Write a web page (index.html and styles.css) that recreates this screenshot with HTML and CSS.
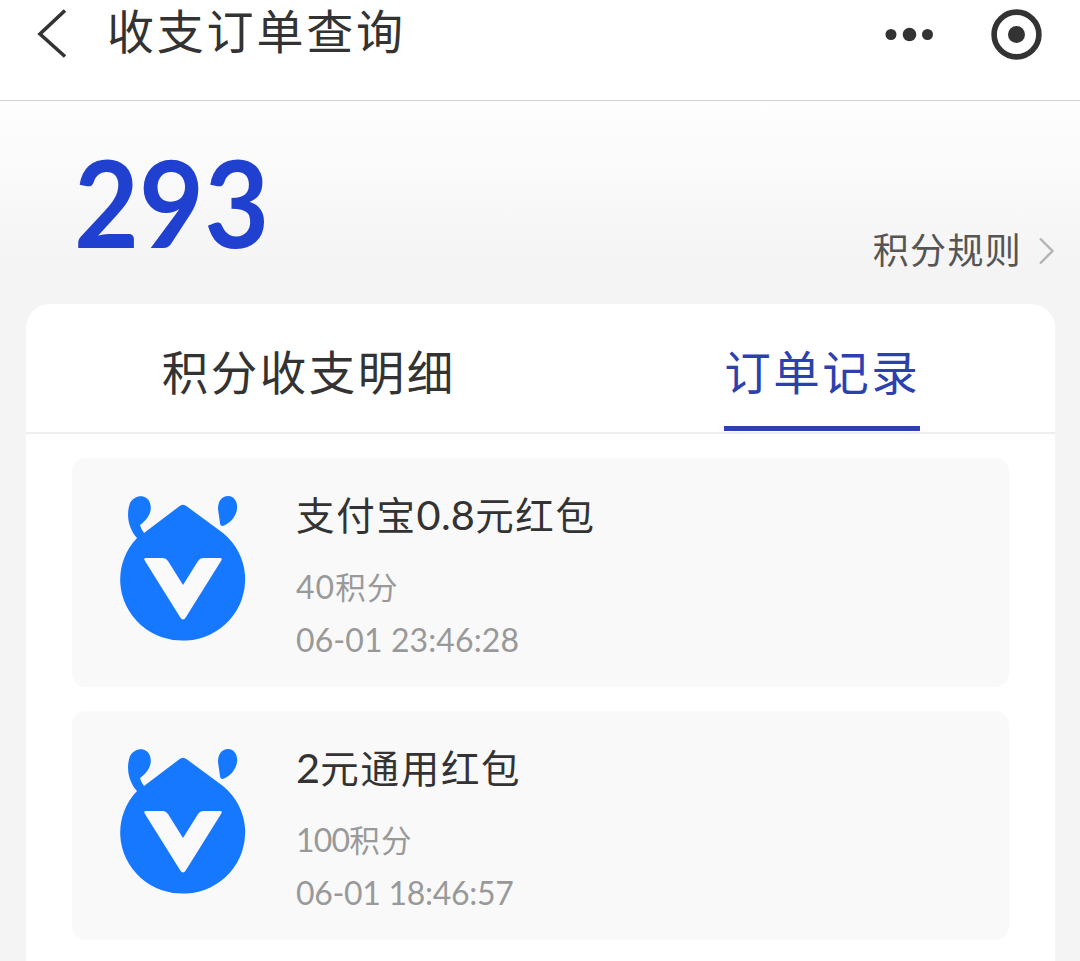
FILE: index.html
```html
<!DOCTYPE html>
<html lang="zh-CN">
<head>
<meta charset="utf-8">
<title>收支订单查询</title>
<link rel="stylesheet" href="styles.css">
</head>
<body>
<svg class="defs" width="0" height="0" aria-hidden="true">
  <symbol id="mascot" viewBox="0 0 126 146">
    <path fill="#1677ff" d="M17 43C8 33 6 19 10 8C15-1 27-1 30 8C33 17 27 25 20 30Q21 34 24 38L59 11.500Q63 8 67 11.500L103 38A62.500 61 0 1 1 17 43Z"/>
    <path fill="#1677ff" d="M98 14C98 6 102 1 108 1C114 1 118 7 117 14C116 22 110 28 103 31Q100 31 100 28Z"/>
    <path fill="#fafafa" d="M26 63H43Q46 63 48 66L63 90L78 66Q80 63 83 63H100Q103 63 101 66L66 122Q63 127 60 122L25 66Q23 63 26 63Z"/>
  </symbol>
</svg>
<header class="nav">
  <svg class="back" width="30" height="50" viewBox="0 0 30 50"><path d="M28 1.500L3 25L28 47.500"/></svg>
  <h1 class="nav-title">收支订单查询</h1>
  <svg class="more" width="50" height="16" viewBox="0 0 50 16"><circle cx="6" cy="8.500" r="5.500"/><circle cx="24.500" cy="8.500" r="6.800"/><circle cx="42.500" cy="8.500" r="5.500"/></svg>
  <svg class="target" width="52" height="52" viewBox="0 0 52 52"><circle class="ring" cx="26.500" cy="26.500" r="22.400"/><circle cx="26.500" cy="26.500" r="8.500"/></svg>
</header>
<main class="page">
  <section class="summary">
    <div class="points">293</div>
    <div class="rules"><span>积分规则</span><svg width="16" height="28" viewBox="0 0 16 28"><path d="M1 2.500L13.500 15L1 27.500"/></svg></div>
  </section>
  <section class="panel">
    <nav class="tabs">
      <div class="tab"><span class="label">积分收支明细</span></div>
      <div class="tab active"><span class="label">订单记录</span></div>
    </nav>
    <div class="orders">
      <article class="order">
        <svg class="avatar"><use href="#mascot"/></svg>
        <div class="info">
          <h2 class="name">支付宝<span class="num">0.8</span>元红包</h2>
          <p class="cost"><span class="digits">40</span>积分</p>
          <p class="time">06-01 23:46:28</p>
        </div>
      </article>
      <article class="order">
        <svg class="avatar"><use href="#mascot"/></svg>
        <div class="info">
          <h2 class="name"><span class="num">2</span>元通用红包</h2>
          <p class="cost"><span class="digits hundred">100</span>积分</p>
          <p class="time late">06-01 18:46:57</p>
        </div>
      </article>
    </div>
  </section>
</main>
</body>
</html>
```
FILE: styles.css
```css
* { box-sizing: border-box; }
body {
  margin: 0;
  height: 961px;
  overflow: hidden;
  display: flex;
  flex-direction: column;
  background: #f4f4f4;
  color: #333;
  font-family: "Noto Sans CJK SC", sans-serif;
}
h1, h2, p { margin: 0; font-weight: 400; }
svg { display: block; flex: none; }
.defs { position: absolute; }
.nav {
  flex: none;
  height: 101px;
  padding: 0 38px 32px 37px;
  display: flex;
  align-items: center;
  background: #fff;
  border-bottom: 1px solid #d2d2d2;
}
.back path { fill: none; stroke: #333; stroke-width: 3.600; }
.nav-title {
  margin: 0 auto 2px 40px;
  font-family: "Liberation Sans", "Noto Sans CJK SC", sans-serif;
  font-size: 47px;
  line-height: 56px;
  letter-spacing: 2.800px;
}
.more { margin-right: 55px; fill: #333; }
.target { fill: #333; }
.target .ring { fill: none; stroke: #333; stroke-width: 5.600; }
.page {
  flex: 1;
  display: flex;
  flex-direction: column;
  background: linear-gradient(#fefefe, #f4f4f4 170px);
}
.summary {
  flex: none;
  height: 203px;
  padding: 41px 25px 0 74px;
  display: flex;
  justify-content: space-between;
}
.points {
  height: 122px;
  color: #2040d0;
  font: 700 120px/121px Lato, sans-serif;
  transform: scaleX(.935);
  transform-origin: left;
}
.rules {
  margin-top: 80px;
  height: 56px;
  display: flex;
  align-items: center;
  gap: 17px;
  color: #555;
  font-size: 36px;
  line-height: 56px;
  letter-spacing: 1.300px;
}
.rules span { height: 60px; }
.rules path { fill: none; stroke: #b4b4b4; stroke-width: 2.400; }
.panel {
  flex: 1;
  margin: 0 25px 0 26px;
  background: #fff;
  border-radius: 24px 24px 0 0;
}
.tabs {
  height: 130px;
  display: grid;
  grid-template-columns: 1fr 1fr;
  border-bottom: 2px solid #eee;
}
.tab {
  display: flex;
  justify-content: center;
  padding-left: 51px;
  font-size: 46.500px;
  line-height: 131px;
  letter-spacing: 2.500px;
}
.tab.active { color: #2c40b0; padding: 0 0 0 49px; }
.active .label { height: 127px; border-bottom: 5px solid #2c40b0; }
.orders {
  display: flex;
  flex-direction: column;
  gap: 24px;
  padding: 24px 46px;
}
.order {
  height: 229px;
  display: flex;
  gap: 50px;
  padding: 37px 48px 0;
  background: #f9f9f9;
  border-radius: 14px;
}
.avatar { width: 126px; height: 146px; }
.info { margin-top: -4px; }
.name {
  height: 44px;
  font-size: 38.500px;
  line-height: 44px;
  letter-spacing: 1.700px;
  white-space: nowrap;
}
.num { font-family: Lato, sans-serif; font-size: 41.500px; letter-spacing: .2px; }
.cost {
  margin-top: 29px;
  height: 44px;
  color: #999;
  font-size: 30.500px;
  line-height: 44px;
  letter-spacing: 1.300px;
}
.digits { font: 32px/44px Lato, sans-serif; letter-spacing: 1px; }
.hundred { letter-spacing: -.8px; }
.time {
  margin-top: 10px;
  height: 44px;
  color: #999;
  font: 32px/44px Lato, sans-serif;
  letter-spacing: .1px;
}
.late { letter-spacing: -.3px; }
```
